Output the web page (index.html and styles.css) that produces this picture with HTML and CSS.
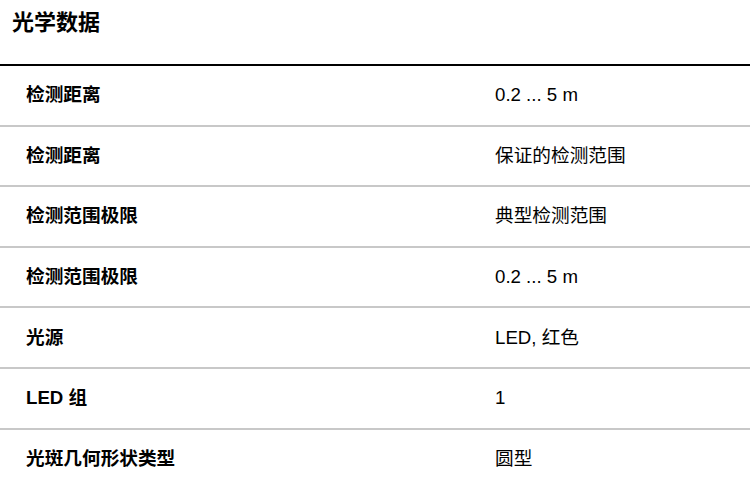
FILE: index.html
```html
<!DOCTYPE html>
<html lang="zh">
<head>
<meta charset="utf-8">
<title>光学数据</title>
<link rel="stylesheet" href="styles.css">
</head>
<body>
<section class="panel">
  <h2 class="panel-title">光学数据</h2>
  <div class="table">
    <div class="row"><div class="label">检测距离</div><div class="value">0.2 ... 5 m</div></div>
    <div class="row"><div class="label">检测距离</div><div class="value">保证的检测范围</div></div>
    <div class="row"><div class="label">检测范围极限</div><div class="value">典型检测范围</div></div>
    <div class="row"><div class="label">检测范围极限</div><div class="value">0.2 ... 5 m</div></div>
    <div class="row"><div class="label">光源</div><div class="value">LED, 红色</div></div>
    <div class="row"><div class="label">LED 组</div><div class="value">1</div></div>
    <div class="row"><div class="label">光斑几何形状类型</div><div class="value">圆型</div></div>
  </div>
</section>
</body>
</html>
```
FILE: styles.css
```css
html, body {
  margin: 0;
  padding: 0;
  background: #fff;
}
body {
  font-family: "Liberation Sans", "Noto Sans CJK SC", sans-serif;
  color: #000;
}
.panel-title {
  margin: 0;
  padding: 10px 12px 28px;
  font-size: 22px;
  line-height: 26px;
  font-weight: bold;
  border-bottom: 2px solid #000;
}
.row {
  display: grid;
  grid-template-columns: 469px 1fr;
  padding: 17.3px 0 17.3px 26px;
  font-size: 18.67px;
  line-height: 24px;
  border-bottom: 2px solid #c8c8c8;
}
.label {
  font-weight: bold;
}
```
